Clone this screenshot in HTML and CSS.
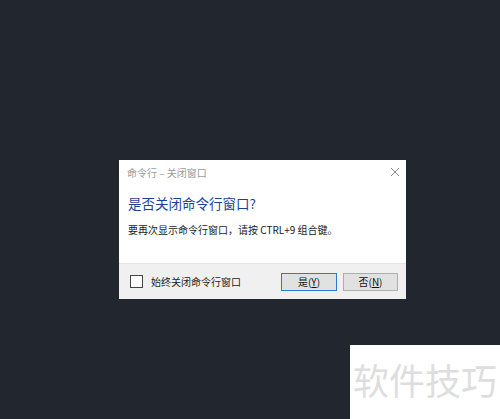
FILE: index.html
```html
<!DOCTYPE html>
<html lang="zh-CN">
<head>
    <meta charset="UTF-8">
    <title>命令行 – 关闭窗口</title>
    <link rel="stylesheet" href="styles.css">
</head>
<body>
    <div class="desktop">
        <!-- 关闭确认对话框 -->
        <div class="dialog">
            <div class="dlg-title">
                <span>命令行 – 关闭窗口</span>
                <svg class="dlg-close" width="10" height="10" viewBox="0 0 10 10">
                    <path d="M1 1 L9 9 M9 1 L1 9" stroke="#8a8a8a" stroke-width="1" fill="none"/>
                </svg>
            </div>
            <div class="dlg-body">
                <div class="dlg-main">是否关闭命令行窗口?</div>
                <div class="dlg-text">要再次显示命令行窗口，请按 CTRL+9 组合键。</div>
            </div>
            <div class="dlg-foot">
                <label class="dlg-check">
                    <span class="check-box"></span>
                    <span>始终关闭命令行窗口</span>
                </label>
                <div class="dlg-buttons">
                    <button type="button" class="btn btn-default">是(<u>Y</u>)</button>
                    <button type="button" class="btn">否(<u>N</u>)</button>
                </div>
            </div>
        </div>

        <!-- 右下角水印 -->
        <div class="watermark">软件技巧</div>
    </div>
</body>
</html>
```

FILE: styles.css
```css
html, body {
    margin: 0;
    padding: 0;
}

body {
    background-color: #22262e;
    font-family: "Noto Sans CJK SC", "Liberation Sans", sans-serif;
}

.desktop {
    position: relative;
    width: 500px;
    height: 419px;
    overflow: hidden;
}

/* 对话框 */
.dialog {
    position: absolute;
    left: 119px;
    top: 160px;
    width: 287px;
    background-color: #fff;
    box-sizing: border-box;
}

.dlg-title {
    height: 24px;
    padding: 0 6px 0 8px;
    display: flex;
    align-items: center;
    justify-content: space-between;
    font-size: 10px;
    color: #9a9a9a;
}

.dlg-close {
    margin-top: -1px;
}

.dlg-body {
    padding: 10px 9px 26px 9px;
}

.dlg-main {
    font-size: 13.5px;
    line-height: 18px;
    color: #1c3f99;
}

.dlg-text {
    margin-top: 11px;
    font-size: 10px;
    line-height: 14px;
    color: #1a1a1a;
}

.dlg-foot {
    height: 36px;
    background-color: #f0f0f0;
    border-top: 1px solid #e4e4e4;
    box-sizing: border-box;
    display: flex;
    align-items: center;
    justify-content: space-between;
    padding: 0 8px 0 11px;
}

.dlg-check {
    display: flex;
    align-items: center;
    gap: 8px;
    font-size: 10px;
    color: #222;
}

.check-box {
    width: 11px;
    height: 11px;
    border: 1px solid #444;
    background-color: #fff;
}

.dlg-buttons {
    display: flex;
    gap: 6px;
}

.btn {
    width: 55px;
    height: 18px;
    padding: 0;
    background-color: #e1e1e1;
    border: 1px solid #adadad;
    font-family: inherit;
    font-size: 10px;
    line-height: 14px;
    color: #111;
}

.btn-default {
    border: 1px solid #2a7ad3;
    width: 56px;
}

/* 水印 */
.watermark {
    position: absolute;
    left: 350px;
    top: 345px;
    width: 150px;
    height: 74px;
    background-color: #fff;
    box-sizing: border-box;
    padding: 15px 0 0 3px;
    font-size: 36px;
    line-height: 38px;
    color: #dedede;
    white-space: nowrap;
}
```
